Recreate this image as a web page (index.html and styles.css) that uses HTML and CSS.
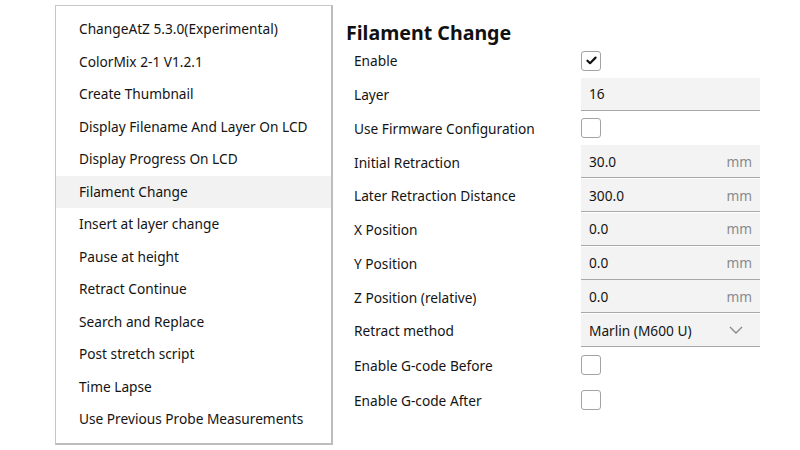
FILE: index.html
```html
<!DOCTYPE html>
<html>
<head>
<meta charset="utf-8">
<link rel="stylesheet" href="styles.css">
</head>
<body>
<div class="page">
  <ul class="scripts">
    <li>ChangeAtZ 5.3.0(Experimental)</li>
    <li>ColorMix 2-1 V1.2.1</li>
    <li>Create Thumbnail</li>
    <li>Display Filename And Layer On LCD</li>
    <li>Display Progress On LCD</li>
    <li class="active">Filament Change</li>
    <li>Insert at layer change</li>
    <li>Pause at height</li>
    <li>Retract Continue</li>
    <li>Search and Replace</li>
    <li>Post stretch script</li>
    <li>Time Lapse</li>
    <li>Use Previous Probe Measurements</li>
  </ul>
  <div class="settings">
    <h1 class="title">Filament Change</h1>
    <div class="row">
      <span class="label">Enable</span>
      <span class="check checked"><svg viewBox="0 0 12 10" width="11" height="9"><path d="M1.5 5.2 L4.4 8 L10.5 1.8" fill="none" stroke="#111" stroke-width="2.4" stroke-linecap="round" stroke-linejoin="round"/></svg></span>
    </div>
    <div class="row">
      <span class="label">Layer</span>
      <span class="field"><span class="value">16</span></span>
    </div>
    <div class="row">
      <span class="label">Use Firmware Configuration</span>
      <span class="check"></span>
    </div>
    <div class="row">
      <span class="label">Initial Retraction</span>
      <span class="field"><span class="value">30.0</span><span class="unit">mm</span></span>
    </div>
    <div class="row">
      <span class="label">Later Retraction Distance</span>
      <span class="field"><span class="value">300.0</span><span class="unit">mm</span></span>
    </div>
    <div class="row">
      <span class="label">X Position</span>
      <span class="field"><span class="value">0.0</span><span class="unit">mm</span></span>
    </div>
    <div class="row">
      <span class="label">Y Position</span>
      <span class="field"><span class="value">0.0</span><span class="unit">mm</span></span>
    </div>
    <div class="row">
      <span class="label">Z Position (relative)</span>
      <span class="field"><span class="value">0.0</span><span class="unit">mm</span></span>
    </div>
    <div class="row">
      <span class="label">Retract method</span>
      <span class="field select"><span class="value">Marlin (M600 U)</span><svg class="chev" viewBox="0 0 14 8" width="14" height="8"><path d="M1 1 L7 7 L13 1" fill="none" stroke="#8a8a8a" stroke-width="1.4"/></svg></span>
    </div>
    <div class="row tall">
      <span class="label">Enable G-code Before</span>
      <span class="check"></span>
    </div>
    <div class="row tall">
      <span class="label">Enable G-code After</span>
      <span class="check"></span>
    </div>
  </div>
</div>
</body>
</html>
```
FILE: styles.css
```css
html, body {
  margin: 0;
  padding: 0;
  background: #ffffff;
}
body {
  font-family: "Noto Sans", "Open Sans", sans-serif;
  font-size: 13.7px;
  color: #141414;
}
.page {
  display: flex;
  align-items: flex-start;
  padding: 5px 0 0 55px;
  gap: 14px;
}
.scripts {
  list-style: none;
  margin: 0;
  padding: 7px 0 7px 0;
  width: 275px;
  border: 1px solid #c6c6c6;
  border-right: 2px solid #bdbdbd;
  border-bottom: 2px solid #bdbdbd;
}
.scripts li {
  height: 32.5px;
  line-height: 32px;
  padding-left: 23px;
  white-space: nowrap;
}
.scripts li.active {
  background: #f2f2f2;
}
.settings {
  display: flex;
  flex-direction: column;
  width: 413px;
}
.title {
  margin: 16px 0 0 -1px;
  font-size: 19.6px;
  line-height: 23px;
  font-weight: bold;
  color: #111;
}
.row {
  display: flex;
  align-items: center;
  height: 33.75px;
  padding-left: 7px;
}
.row.tall {
  height: 35px;
}
.label {
  width: 227px;
  flex: none;
}
.check {
  width: 18px;
  height: 18px;
  border: 1px solid #a3a3a3;
  border-radius: 3px;
  display: flex;
  align-items: center;
  justify-content: center;
  background: #fff;
}
.field {
  display: flex;
  align-items: center;
  justify-content: space-between;
  width: 179px;
  height: 33px;
  align-self: flex-start;
  background: #f3f3f3;
  border-bottom: 1px solid #a8a8a8;
  padding: 0 8px;
  box-sizing: border-box;
}
.value {
  color: #141414;
}
.unit {
  color: #8a8a8a;
}
.select .chev {
  margin-right: 9px;
}
```
